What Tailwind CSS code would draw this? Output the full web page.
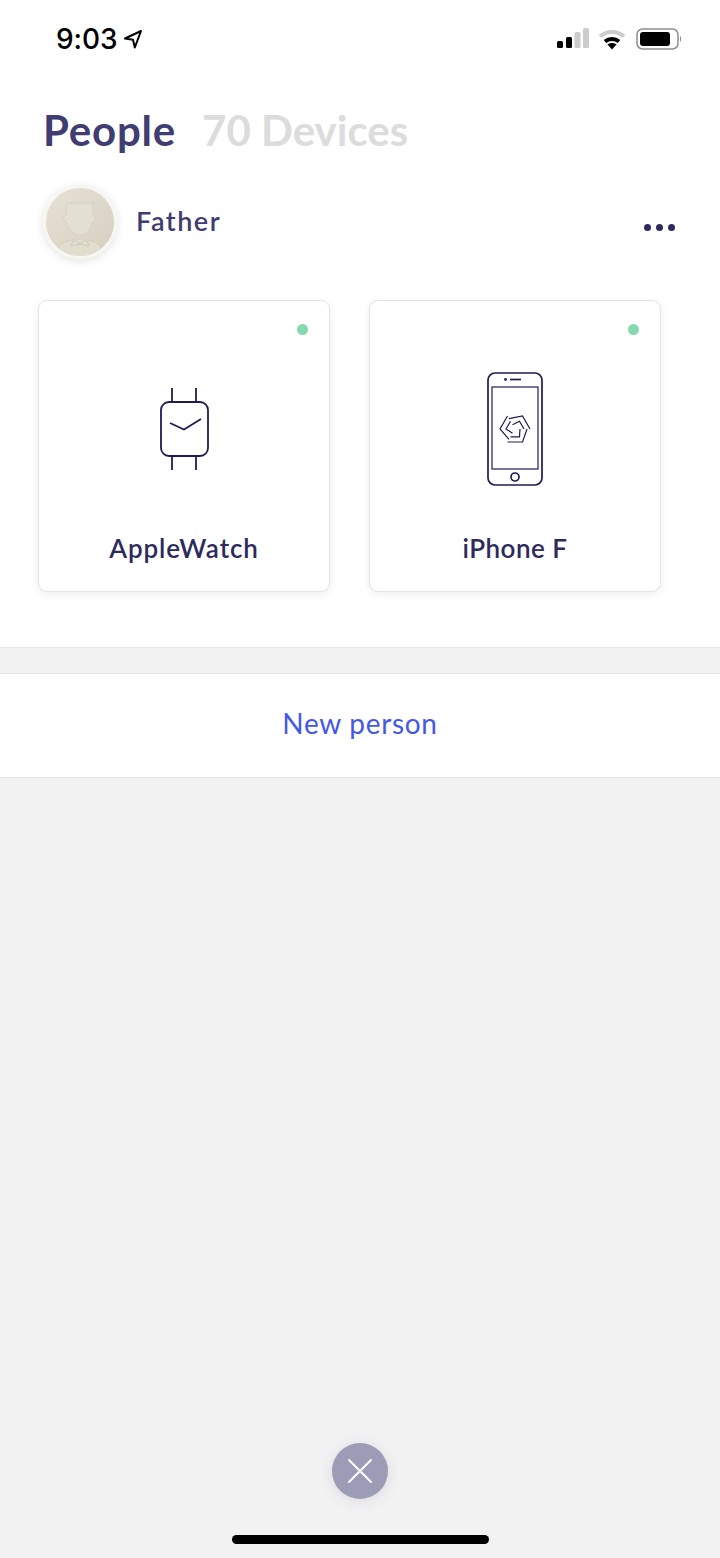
<!DOCTYPE html>
<html lang="en">
<head>
  <meta charset="UTF-8" />
  <meta name="viewport" content="width=device-width, initial-scale=1.0"/>
  <title>People</title>
  <script src="https://cdn.jsdelivr.net/npm/@tailwindcss/browser@4"></script>
</head>
<body class="relative w-[720px] h-[1558px] overflow-hidden bg-[#f2f2f3] font-['Lato','Open_Sans',sans-serif]">

  <!-- Top section -->
  <section class="h-[648px] bg-white border-b border-[#e9e9e9]">

    <!-- Status bar -->
    <div class="h-[78px] pl-[56px] pr-[38px] flex justify-between items-center">
      <div class="flex items-center gap-[6px]">
        <span class="font-['Inter',sans-serif] text-[28px] font-medium tracking-[-0.1px] text-black">9:03</span>
        <svg width="20" height="20" viewBox="0 0 20 20" fill="none" stroke="#000" stroke-width="2" stroke-linejoin="round"><path d="M18 2 2 9.5l8 1.2 1.8 7.800z"/></svg>
      </div>
      <div class="flex items-center">
        <svg width="33" height="22" viewBox="0 0 33 22">
          <rect x="1" y="13" width="6" height="7" rx="1.5" fill="#000"/>
          <rect x="10" y="9" width="6" height="11" rx="1.5" fill="#000"/>
          <rect x="18.500" y="4" width="6" height="16" rx="1.5" fill="#ccc"/>
          <rect x="27" y="0" width="6" height="20" rx="1.5" fill="#ccc"/>
        </svg>
        <svg class="ml-[9px]" width="28" height="21" viewBox="0 0 28 21" fill="none">
          <path d="M2 7.500C9 1.500 19 1.500 26 7.500" stroke="#ccc" stroke-width="4"/>
          <path d="M7 12.500C11 9 17 9 21 12.500" stroke="#000" stroke-width="4"/>
          <path d="M9.500 15.500 14 20.500l4.500-5c-2.500-2-6.500-2-9 0z" fill="#000"/>
        </svg>
        <svg class="ml-[10px]" width="46" height="22" viewBox="0 0 46 22">
          <rect x="1" y="1" width="41" height="20" rx="5.500" fill="none" stroke="#8f8f8f" stroke-width="1.500"/>
          <rect x="4" y="4" width="30" height="14" rx="3" fill="#000"/>
          <path d="M44 8c1.500.5 1.500 5.500 0 6z" fill="#8f8f8f"/>
        </svg>
      </div>
    </div>

    <!-- Tabs -->
    <div class="mt-[27px] pl-[43px] flex items-baseline gap-[26px] text-[42px] leading-[50px] font-bold">
      <span class="tracking-[0.8px] text-[#3f3d72]">People</span>
      <span class="text-[#dcdcdc]">70 Devices</span>
    </div>

    <!-- Person row -->
    <div class="mt-[30px] pl-[43px] pr-[45px] flex items-center">
      <div class="w-[74px] h-[74px] rounded-full border-[3px] border-[#f8f6f1] bg-gradient-to-br from-[#e6e1d4] to-[#d5d0c0] shadow-[0_2px_10px_rgba(0,0,0,0.12)] overflow-hidden">
        <svg width="68" height="68" viewBox="0 0 68 68">
          <path d="M13 70V60c0-4 3-5 7-6l8-3h12l7 3c4 1 7 2 7 6v10z" fill="#e1ddcf" stroke="#d6d1c1"/>
          <path d="M24 15h23v12c3 0 3 7-1 8-1 7-7 12-12.500 12S22 42 21 35c-4-1-4-8-1-8v-8c0-2 2-4 4-4z" fill="#e3dfd1" stroke="#d6d1c1"/>
          <path d="M27 51l7 5 7-5M27 52l-2 6 9-2 9 2-2-6" fill="none" stroke="#d0cbba"/>
        </svg>
      </div>
      <span class="ml-[19px] -mt-[2px] text-[27px] font-semibold tracking-[1.5px] text-[#3f3d72]">Father</span>
      <div class="ml-auto mt-[10px] flex gap-[5px]">
        <span class="w-[7px] h-[7px] rounded-full bg-[#2d2a5e]"></span>
        <span class="w-[7px] h-[7px] rounded-full bg-[#2d2a5e]"></span>
        <span class="w-[7px] h-[7px] rounded-full bg-[#2d2a5e]"></span>
      </div>
    </div>

    <!-- Devices -->
    <div class="mt-[41px] pl-[38px] flex gap-[39px]">
      <div class="relative w-[292px] h-[292px] bg-white border border-[#e4e4e4] rounded-[9px] shadow-[0_2px_8px_rgba(0,0,0,0.07)] flex flex-col items-center">
        <span class="absolute top-[23px] right-[21px] w-[11px] h-[11px] rounded-full bg-[#84d9ae]"></span>
        <svg class="mt-[86px] ml-[2px]" width="50" height="84" viewBox="0 0 50 84" fill="none" stroke="#1f1c55" stroke-width="1.800">
          <rect x="1" y="15" width="47" height="54" rx="8"/>
          <path d="M12 1v14M36 1v14M12 69v14M36 69v14"/>
          <path d="M10 36l14 6.500L41 32"/>
        </svg>
        <span class="mt-[58px] text-[26px] font-semibold tracking-[0.9px] text-[#2d2a5e]">AppleWatch</span>
      </div>
      <div class="relative w-[292px] h-[292px] bg-white border border-[#e4e4e4] rounded-[9px] shadow-[0_2px_8px_rgba(0,0,0,0.07)] flex flex-col items-center">
        <span class="absolute top-[23px] right-[21px] w-[11px] h-[11px] rounded-full bg-[#84d9ae]"></span>
        <svg class="mt-[71px]" width="56" height="114" viewBox="0 0 56 114" fill="none" stroke="#1f1c55" stroke-width="1.700">
          <rect x="1" y="1" width="54" height="112" rx="7"/>
          <rect x="5" y="15" width="46" height="82" stroke-width="1.200"/>
          <path d="M23 7.500h11"/>
          <circle cx="18.500" cy="7.500" r=".6"/>
          <circle cx="28" cy="105" r="4"/>
          <g stroke-width="1.200" transform="translate(0 1)">
            <g>
              <path d="M22 45.600 35.500 43 43 56"/>
              <path d="M25.500 51.700 32.500 48.200 37 56"/>
            </g>
            <g transform="rotate(120 28 56)">
              <path d="M22 45.600 35.500 43 43 56"/>
              <path d="M25.500 51.700 32.500 48.200 37 56"/>
            </g>
            <g transform="rotate(240 28 56)">
              <path d="M22 45.600 35.500 43 43 56"/>
              <path d="M25.500 51.700 32.500 48.200 37 56"/>
            </g>
          </g>
        </svg>
        <span class="mt-[43px] text-[26px] font-semibold tracking-[0.5px] text-[#2d2a5e]">iPhone F</span>
      </div>
    </div>
  </section>

  <!-- New person -->
  <div class="mt-[25px] h-[105px] bg-white border-y border-[#e2e2e2] flex items-center justify-center">
    <span class="-mt-[6px] text-[28px] tracking-[0.7px] text-[#4458e6]">New person</span>
  </div>

  <!-- Close button -->
  <button class="absolute left-[332px] top-[1443px] w-[56px] h-[56px] rounded-full bg-[#9d9cb6] shadow-[0_2px_14px_rgba(60,60,110,0.12)] flex items-center justify-center">
    <svg width="26" height="26" viewBox="0 0 26 26" stroke="#fff" stroke-width="2" stroke-linecap="round"><path d="M2 2l22 22M24 2 2 24"/></svg>
  </button>

  <!-- Home indicator -->
  <div class="absolute left-[232px] top-[1535px] w-[257px] h-[9px] rounded-full bg-black"></div>

</body>
</html>
